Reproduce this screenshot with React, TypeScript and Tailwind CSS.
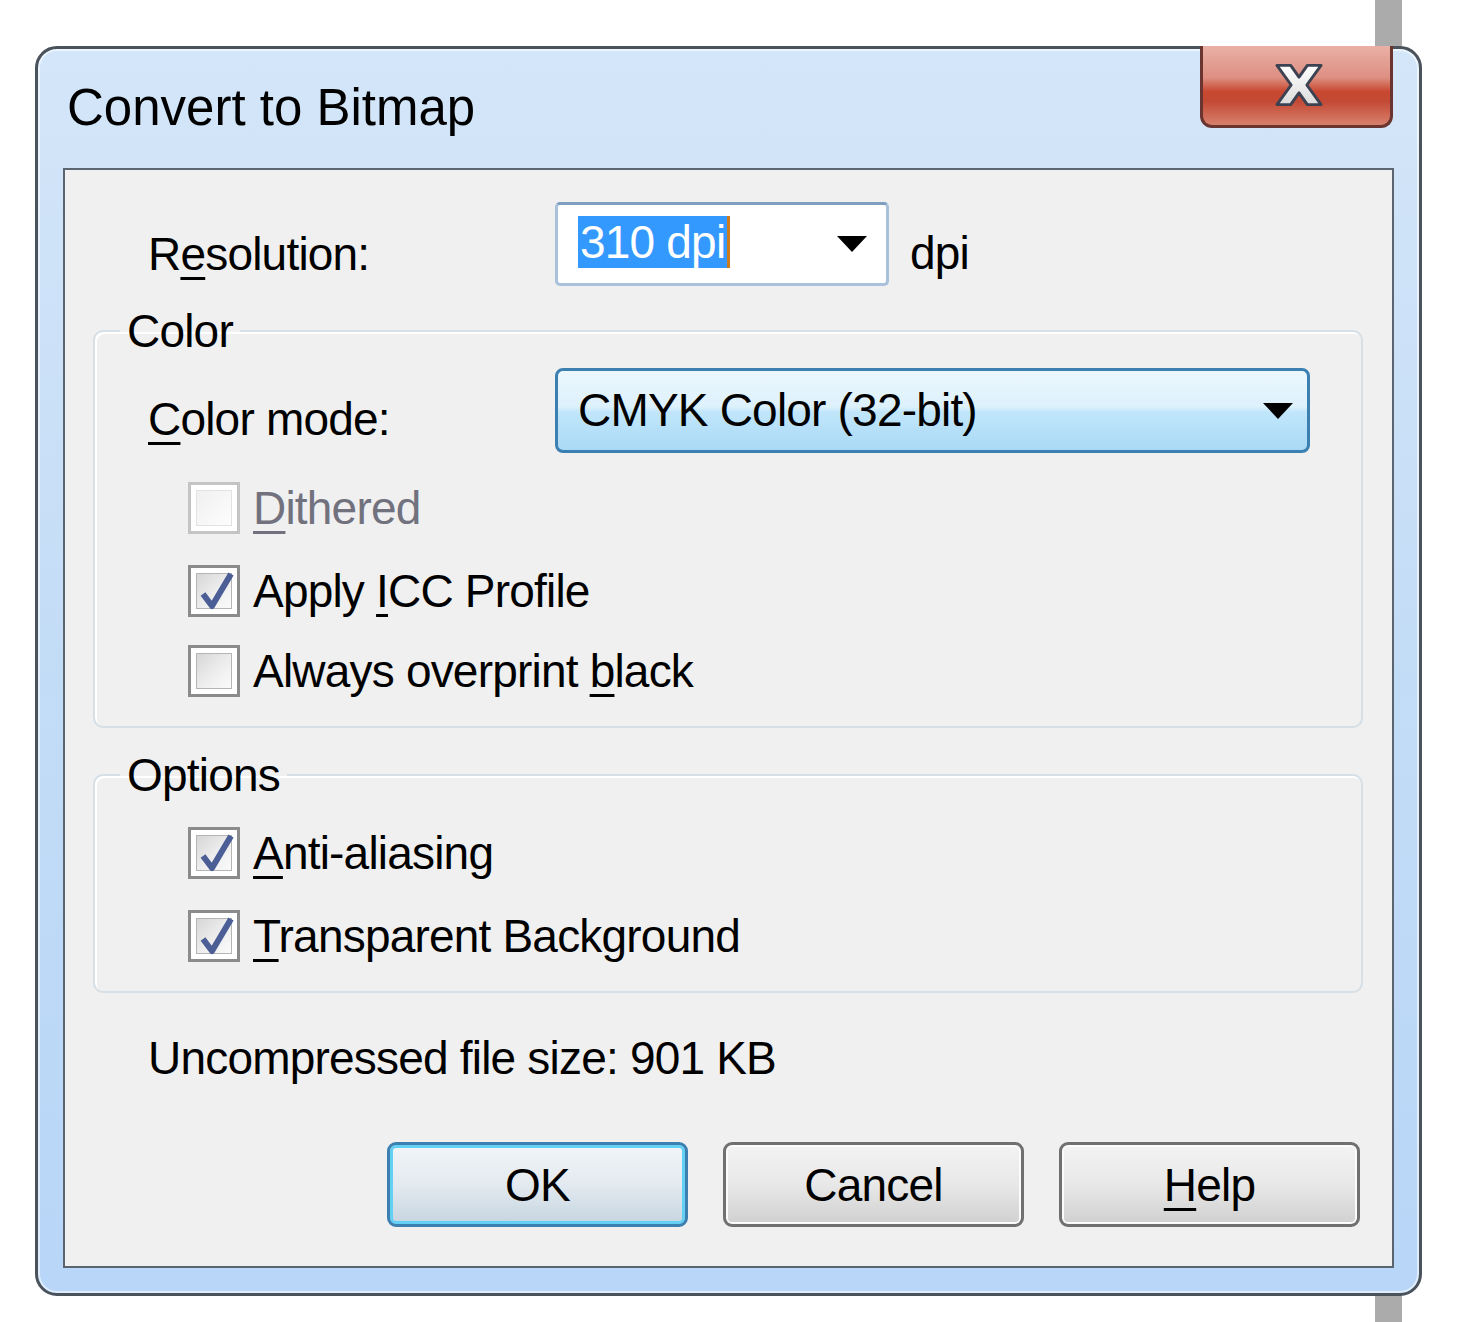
import React from "react";

const labelCls = "text-[46px] leading-[50px] tracking-[-0.8px] text-black";
const ul = "underline decoration-[3px] underline-offset-[7px]";

function Check({ checked, disabled }: { checked?: boolean; disabled?: boolean }) {
  return (
    <span
      className={
        "flex h-[52px] w-[52px] shrink-0 items-center justify-center border-[3px] bg-white " +
        (disabled ? "border-[#c4c4c4]" : "border-[#8b8b8b]")
      }
    >
      <span
        className={
          "relative flex h-[36px] w-[36px] items-center justify-center border " +
          (disabled
            ? "border-[#e2e2e2] bg-gradient-to-br from-[#f0f0f0] to-[#fdfdfd]"
            : "border-[#b5b5b5] bg-gradient-to-br from-[#d6d6d6] via-[#ececec] to-[#fbfbfb]")
        }
      >
        {checked && (
          <svg width="40" height="44" viewBox="0 0 40 44" className="absolute -top-[6px] left-0">
            <path d="M6 26 L15 38 L34 6" fill="none" stroke="#4b5f96" strokeWidth="6" strokeLinejoin="round" />
          </svg>
        )}
      </span>
    </span>
  );
}

function CheckRow({
  checked,
  disabled,
  children,
  className = "",
}: {
  checked?: boolean;
  disabled?: boolean;
  children: React.ReactNode;
  className?: string;
}) {
  return (
    <div className={"ml-[93px] flex h-[52px] items-center gap-[13px] " + className}>
      <Check checked={checked} disabled={disabled} />
      <span className={labelCls + (disabled ? " !text-[#72727f]" : "")}>{children}</span>
    </div>
  );
}

function Triangle() {
  return (
    <svg width="30" height="16" viewBox="0 0 30 16">
      <path d="M0 0 H30 L15 16 Z" fill="#000" />
    </svg>
  );
}

function Button({ children, primary }: { children: React.ReactNode; primary?: boolean }) {
  return (
    <button
      className={
        "flex h-[85px] w-[301px] items-center justify-center rounded-[9px] border-[3px] " +
        (primary
          ? "border-[#3c7fb1] bg-gradient-to-b from-[#f2f5f8] via-[#e3eaf0] to-[#c6d5e0] shadow-[inset_0_0_0_3px_#63d0f5]"
          : "border-[#707070] bg-gradient-to-b from-[#f3f3f3] via-[#e8e8e8] to-[#d0d0d0] shadow-[inset_0_0_0_2px_#fbfbfb]")
      }
    >
      <span className={labelCls}>{children}</span>
    </button>
  );
}

export default function App() {
  return (
    <div className="relative h-[1322px] w-[1474px] overflow-hidden bg-white font-['Liberation_Sans',Arial,sans-serif]">
      {/* scrollbar behind dialog */}
      <div className="absolute left-[1375px] top-0 h-[1322px] w-[27px] bg-[#ababab]" />

      <div className="relative ml-[35px] mt-[46px] h-[1250px] w-[1387px] rounded-[22px] border-[3px] border-[#4a525c] bg-gradient-to-b from-[#d4e6f9] via-[#c3dcf6] to-[#b8d6f8] shadow-[inset_0_0_0_2px_rgba(255,255,255,0.55)]">
        {/* title bar */}
        <div className="flex h-[119px] items-start justify-between">
          <div className="ml-[29px] mt-[33px] text-[51px] leading-[52px] text-black">Convert to Bitmap</div>
          <div className="-mt-[3px] mr-[26px] flex h-[82px] w-[193px] items-center justify-center rounded-b-[12px] border-[3px] border-t-0 border-[#6a3530] bg-[linear-gradient(to_bottom,#eab0a6_0%,#dd8f82_40%,#c8472f_58%,#c34a35_70%,#d8806c_100%)]">
            <svg width="50" height="44" viewBox="-3 -2 51 44" className="-mt-[2px] ml-[4px]">
              <defs>
                <linearGradient id="xg" x1="0" y1="0" x2="0" y2="1">
                  <stop offset="0" stopColor="#ffffff" />
                  <stop offset="1" stopColor="#dcdcdc" />
                </linearGradient>
              </defs>
              <path
                d="M0 0 H14 L22.5 12 L31 0 H45 L30.5 20 L45 40 H31 L22.5 28 L14 40 H0 L14.5 20 Z"
                fill="url(#xg)"
                stroke="#3d4252"
                strokeWidth="3"
                strokeLinejoin="round"
              />
            </svg>
          </div>
        </div>

        {/* client area */}
        <div className="mx-[25px] flex h-[1100px] flex-col border-2 border-[#5b6571] bg-[#f0f0f0]">
          {/* Resolution */}
          <div className="mt-[32px] flex h-[84px] items-center">
            <div className={"ml-[83px] w-[407px] pt-[20px] " + labelCls}>
              R<span className={ul}>e</span>solution:
            </div>
            <div className="flex h-[84px] w-[334px] items-center justify-between rounded-[5px] border-[3px] border-[#a9c1da] border-t-[#7f9fc0] bg-white pl-[20px] pr-[19px]">
              <div className="-mt-[4px] flex items-center">
                <span className="bg-[#3399ff] px-[2px] text-[46px] leading-[52px] tracking-[-0.8px] text-white">310 dpi</span>
                <span className="h-[52px] w-[3px] bg-[#cc7a1e]" />
              </div>
              <Triangle />
            </div>
            <div className={"ml-[21px] pt-[18px] " + labelCls}>dpi</div>
          </div>

          {/* Color group */}
          <fieldset className="ml-[28px] mt-[20px] w-[1270px] rounded-[10px] border-2 border-[#d5dfe5] pb-[29px] shadow-[inset_2px_2px_0_#ffffff]">
            <legend className={"ml-[25px] px-[7px] " + labelCls}>Color</legend>
            <div className="mt-[12px] flex h-[85px] items-center">
              <div className={"ml-[53px] w-[407px] pt-[16px] " + labelCls}>
                <span className={ul}>C</span>olor mode:
              </div>
              <div className="flex h-[85px] w-[755px] items-center justify-between rounded-[8px] border-[3px] border-[#3c7fb1] bg-[linear-gradient(to_bottom,#ecf7fd_0%,#ddf1fc_45%,#c1e6fb_52%,#a9d9f5_100%)] pl-[20px] pr-[14px]">
                <span className={"-mt-[2px] " + labelCls}>CMYK Color (32-bit)</span>
                <Triangle />
              </div>
            </div>
            <CheckRow disabled className="mt-[29px]">
              <span className={ul}>D</span>ithered
            </CheckRow>
            <CheckRow checked className="mt-[31px]">
              Apply <span className={ul}>I</span>CC Profile
            </CheckRow>
            <CheckRow className="mt-[28px]">
              Always overprint <span className={ul}>b</span>lack
            </CheckRow>
          </fieldset>

          {/* Options group */}
          <fieldset className="ml-[28px] mt-[22px] w-[1270px] rounded-[10px] border-2 border-[#d5dfe5] pb-[29px] shadow-[inset_2px_2px_0_#ffffff]">
            <legend className={"ml-[25px] px-[7px] " + labelCls}>Options</legend>
            <CheckRow checked className="mt-[27px]">
              <span className={ul}>A</span>nti-aliasing
            </CheckRow>
            <CheckRow checked className="mt-[31px]">
              <span className={ul}>T</span>ransparent Background
            </CheckRow>
          </fieldset>

          <div className={"ml-[83px] mt-[40px] " + labelCls}>Uncompressed file size: 901 KB</div>

          <div className="mt-[59px] flex justify-end gap-[35px] pr-[32px]">
            <Button primary>OK</Button>
            <Button>Cancel</Button>
            <Button>
              <span className={ul}>H</span>elp
            </Button>
          </div>
        </div>
      </div>
    </div>
  );
}
